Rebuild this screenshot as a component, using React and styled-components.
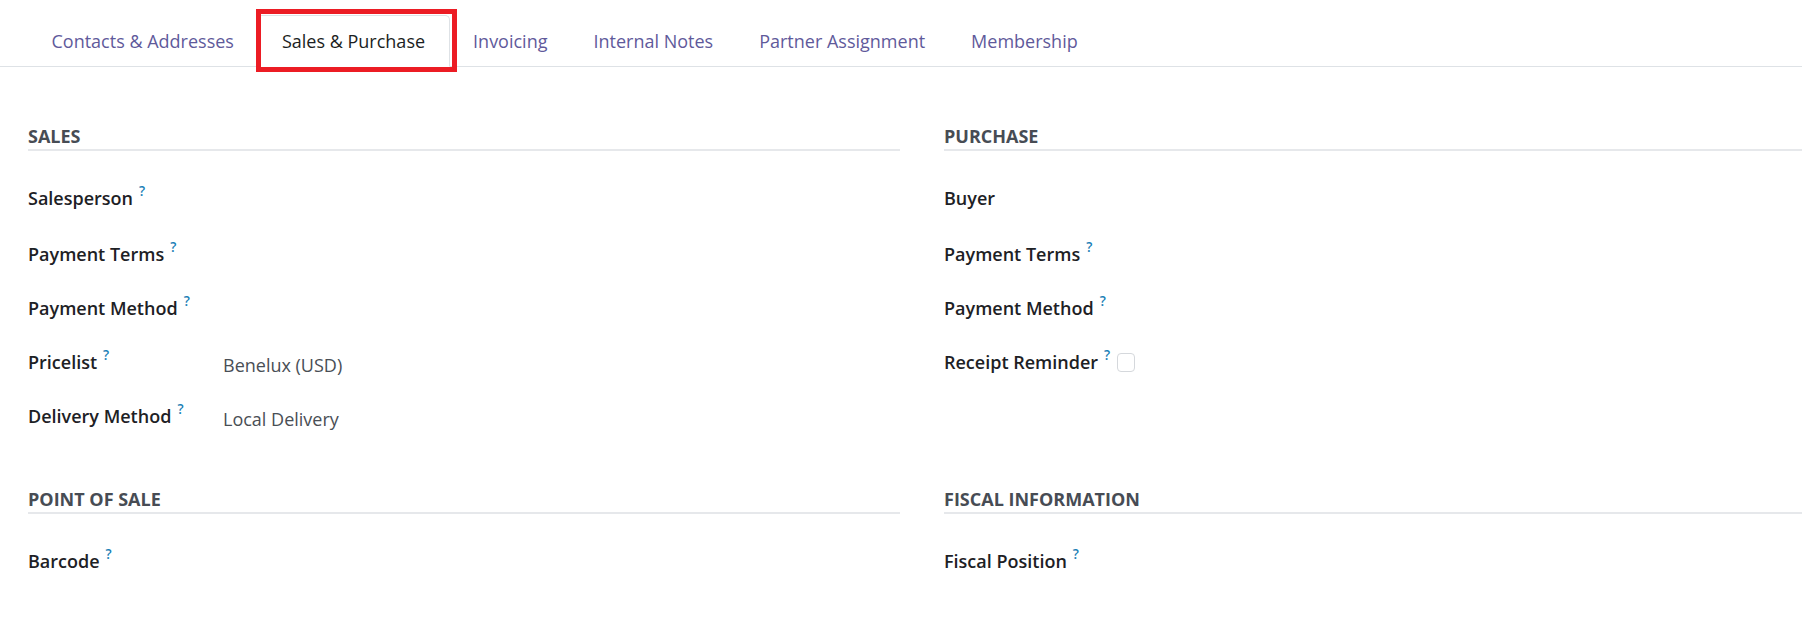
import React from "react";
import styled, { createGlobalStyle } from "styled-components";

const GlobalStyle = createGlobalStyle`
  html, body {
    margin: 0;
    padding: 0;
    background: #ffffff;
    overflow: hidden;
  }
  body {
    font-family: "Open Sans", "Noto Sans", "Liberation Sans", sans-serif;
    font-size: 18px;
    color: #1f2327;
  }
  * { box-sizing: border-box; }
`;

const Page = styled.div`
  width: 1802px;
  min-height: 623px;
`;

const TabBar = styled.nav`
  display: flex;
  align-items: flex-end;
  padding: 15px 0 0 28.5px;
  border-bottom: 1px solid #dee2e6;
`;

const Tab = styled.a`
  position: relative;
  display: flex;
  align-items: center;
  height: 52px;
  margin-bottom: -1px;
  padding: 0 ${(p) => (p.$active ? 24 : 22)}px 1px;
  font-size: 18px;
  line-height: 24px;
  white-space: nowrap;
  cursor: pointer;
  color: ${(p) => (p.$active ? "#1b1e22" : "#5f5a9b")};
  background: ${(p) => (p.$active ? "#ffffff" : "transparent")};
  border: 1px solid ${(p) => (p.$active ? "#dee2e6" : "transparent")};
  border-bottom-color: ${(p) => (p.$active ? "#ffffff" : "transparent")};
  border-radius: 5px 5px 0 0;
`;

/* red highlight frame drawn around the current tab */
const Highlight = styled.span`
  position: absolute;
  left: -2px;
  top: -7px;
  right: -8px;
  bottom: -6px;
  border: 5px solid #ec1c24;
  pointer-events: none;
`;

const Sheet = styled.div`
  display: grid;
  grid-template-columns: 872px 872px;
  column-gap: 44px;
  padding: 0 0 0 28px;
`;

const Group = styled.section`
  margin-top: ${(p) => p.$top}px;
`;

const GroupTitle = styled.h3`
  margin: 0;
  padding-bottom: 1px;
  font-size: 18px;
  line-height: 24px;
  font-weight: 700;
  text-transform: uppercase;
  color: #474c54;
  border-bottom: 2px solid #e6e8eb;
`;

const Fields = styled.div`
  padding-top: 20px;
`;

const FieldRow = styled.div`
  display: grid;
  grid-template-columns: 195px 1fr;
  align-items: start;
  height: 54px;

  &:first-child {
    height: 56px;
  }
`;

const Label = styled.label`
  display: flex;
  align-items: center;
  padding-top: 15px;
  font-size: 18px;
  line-height: 24px;
  font-weight: 600;
  color: #1d2125;
  white-space: nowrap;
`;

const Help = styled.sup`
  position: relative;
  top: -7px;
  margin-left: 6px;
  font-size: 13.5px;
  line-height: 0;
  font-weight: 600;
  color: #1a80b6;
  vertical-align: baseline;
`;

const Value = styled.span`
  padding-top: 17.5px;
  font-size: 18px;
  line-height: 24px;
  color: #494e55;
  white-space: nowrap;
`;

const CheckBox = styled.span`
  display: inline-block;
  width: 18px;
  height: 19px;
  margin-left: 7px;
  border: 1px solid #d5d8dc;
  border-radius: 4px;
  background: #ffffff;
`;

const tabs = [
  "Contacts & Addresses",
  "Sales & Purchase",
  "Invoicing",
  "Internal Notes",
  "Partner Assignment",
  "Membership",
];

const groups = [
  {
    title: "Sales",
    top: 57,
    fields: [
      { label: "Salesperson", help: true },
      { label: "Payment Terms", help: true },
      { label: "Payment Method", help: true },
      { label: "Pricelist", help: true, value: "Benelux (USD)" },
      { label: "Delivery Method", help: true, value: "Local Delivery" },
    ],
  },
  {
    title: "Purchase",
    top: 57,
    fields: [
      { label: "Buyer" },
      { label: "Payment Terms", help: true },
      { label: "Payment Method", help: true },
      { label: "Receipt Reminder", help: true, checkbox: true },
    ],
  },
  {
    title: "Point of Sale",
    top: 44,
    fields: [{ label: "Barcode", help: true }],
  },
  {
    title: "Fiscal Information",
    top: 44,
    fields: [{ label: "Fiscal Position", help: true }],
  },
];

function Field({ label, help, value, checkbox }) {
  return (
    <FieldRow>
      <Label>
        {label}
        {help && <Help>?</Help>}
        {checkbox && <CheckBox />}
      </Label>
      {value ? <Value>{value}</Value> : <span />}
    </FieldRow>
  );
}

export default function App() {
  return (
    <Page>
      <GlobalStyle />
      <TabBar>
        {tabs.map((t) => (
          <Tab key={t} $active={t === "Sales & Purchase"}>
            {t}
            {t === "Sales & Purchase" && <Highlight />}
          </Tab>
        ))}
      </TabBar>
      <Sheet>
        {groups.map((g) => (
          <Group key={g.title} $top={g.top}>
            <GroupTitle>{g.title}</GroupTitle>
            <Fields>
              {g.fields.map((f) => (
                <Field key={f.label} {...f} />
              ))}
            </Fields>
          </Group>
        ))}
      </Sheet>
    </Page>
  );
}
